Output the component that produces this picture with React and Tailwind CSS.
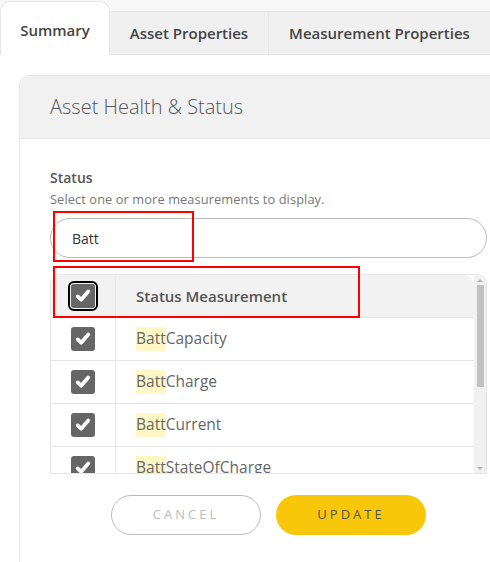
import React, { useState } from 'react';

const rows = ['Capacity', 'Charge', 'Current', 'StateOfCharge', 'Temperature', 'Voltage'];

const Check = ({ focused }) => (
  <span
    className={`flex items-center justify-center w-6 h-6 rounded-[3px] bg-[#666666] ${focused ? 'outline-2 outline-black outline-offset-1' : ''}`}
  >
    <svg viewBox="0 0 24 24" className="w-[18px] h-[18px]" fill="none" stroke="white" strokeWidth="5" strokeLinecap="round" strokeLinejoin="round">
      <path d="M5 12.5l4.5 4.5L19 6" />
    </svg>
  </span>
);

export default function App() {
  const [query, setQuery] = useState('Batt');
  const [tab, setTab] = useState(0);
  const tabs = ['Summary', 'Asset Properties', 'Measurement Properties'];

  return (
    <div className="relative w-[490px] h-[562px] overflow-hidden bg-white text-[#555555]" style={{ fontFamily: '"Open Sans", "Liberation Sans", sans-serif' }}>
      {/* Tabs */}
      <div className="flex h-[55px] bg-[#f8f8f8] pt-px">
        {tabs.map((t, i) =>
          i === tab ? (
            <button key={t} onClick={() => setTab(i)} className="w-[110px] h-[54px] bg-white rounded-t-[10px] border border-b-0 border-[#e6e6e6] text-[15px] font-semibold text-[#444] pt-[3px]">
              {t}
            </button>
          ) : (
            <button key={t} onClick={() => setTab(i)} className={`mt-[10px] h-[44px] bg-[#f0f0f0] border-t border-b border-[#e6e6e6] text-[15px] font-semibold text-[#444] ${i === 1 ? 'w-[159px] border-r' : 'flex-1'}`}>
              {t}
            </button>
          )
        )}
      </div>

      {/* Card */}
      <div className="mt-[20px] ml-[19px] w-[500px] rounded-tl-[10px] border border-[#e6e6e6]">
        <div className="h-[63px] bg-[#f1f1f1] rounded-tl-[10px] border-b border-[#e6e6e6] flex items-center pl-[30px]">
          <h2 className="text-[20px] font-light text-[#555]">Asset Health &amp; Status</h2>
        </div>
        <div className="pl-[30px] pt-[30px] pb-[40px]">
          <div className="w-[437px]">
            <p className="text-[14px] font-semibold text-[#555] leading-[18px]">Status</p>
            <p className="text-[12.8px] text-[#777] leading-[16px] mt-[4px] tracking-[0.1px]">Select one or more measurements to display.</p>
            <input
              value={query}
              onChange={(e) => setQuery(e.target.value)}
              className="mt-[11px] w-full h-[40px] rounded-full border border-[#bbbbbb] px-[21px] text-[14px] text-[#333] outline-none"
            />

            <div className="mt-[16px] h-[200px] flex rounded-t-[10px] border border-[#e6e6e6] overflow-hidden">
              <div className="flex-1 overflow-hidden">
                <div className="flex h-[43px] bg-[#f2f2f2] border-b border-[#e6e6e6] rounded-tr-[10px]">
                  <div className="w-[65px] flex items-center justify-center border-r border-[#e6e6e6]">
                    <Check focused />
                  </div>
                  <div className="flex items-center pl-[20px] text-[15px] font-semibold text-[#555]">Status Measurement</div>
                </div>
                {rows.map((r) => (
                  <div key={r} className="flex h-[43px] border-b border-[#e6e6e6]">
                    <div className="w-[65px] flex items-center justify-center border-r border-[#e6e6e6]">
                      <Check />
                    </div>
                    <div className="flex items-center pl-[20px] text-[15.5px] text-[#666]">
                      <span className="bg-[#fff8c6]">Batt</span>
                      {r}
                    </div>
                  </div>
                ))}
              </div>
              {/* scrollbar */}
              <div className="w-[12px] bg-[#f1f1f1] flex flex-col items-center">
                <div className="h-[10px] flex items-center justify-center">
                  <span className="w-0 h-0 border-x-[3px] border-x-transparent border-b-[3px] border-b-[#b5b5b5]" />
                </div>
                <div className="w-[7px] h-[102px] bg-[#c1c1c1]" />
                <div className="flex-1" />
                <div className="h-[10px] flex items-center justify-center">
                  <span className="w-0 h-0 border-x-[3px] border-x-transparent border-t-[3px] border-t-[#b5b5b5]" />
                </div>
              </div>
            </div>

            <div className="mt-[21px] flex justify-center gap-[15px]">
              <button className="w-[150px] h-[40px] rounded-full border border-[#bbbbbb] text-[13px] tracking-[3px] text-[#bbbbbb] font-medium">CANCEL</button>
              <button className="w-[150px] h-[40px] rounded-full bg-[#f8c70a] text-[13px] tracking-[3px] text-[#555] font-medium">UPDATE</button>
            </div>
          </div>
        </div>
      </div>

      {/* annotation boxes */}
      <div className="absolute left-[53px] top-[211px] w-[141px] h-[51px] border-2 border-[#ff0000] pointer-events-none" />
      <div className="absolute left-[53px] top-[266px] w-[307px] h-[52px] border-2 border-[#ff0000] pointer-events-none" />
    </div>
  );
}
